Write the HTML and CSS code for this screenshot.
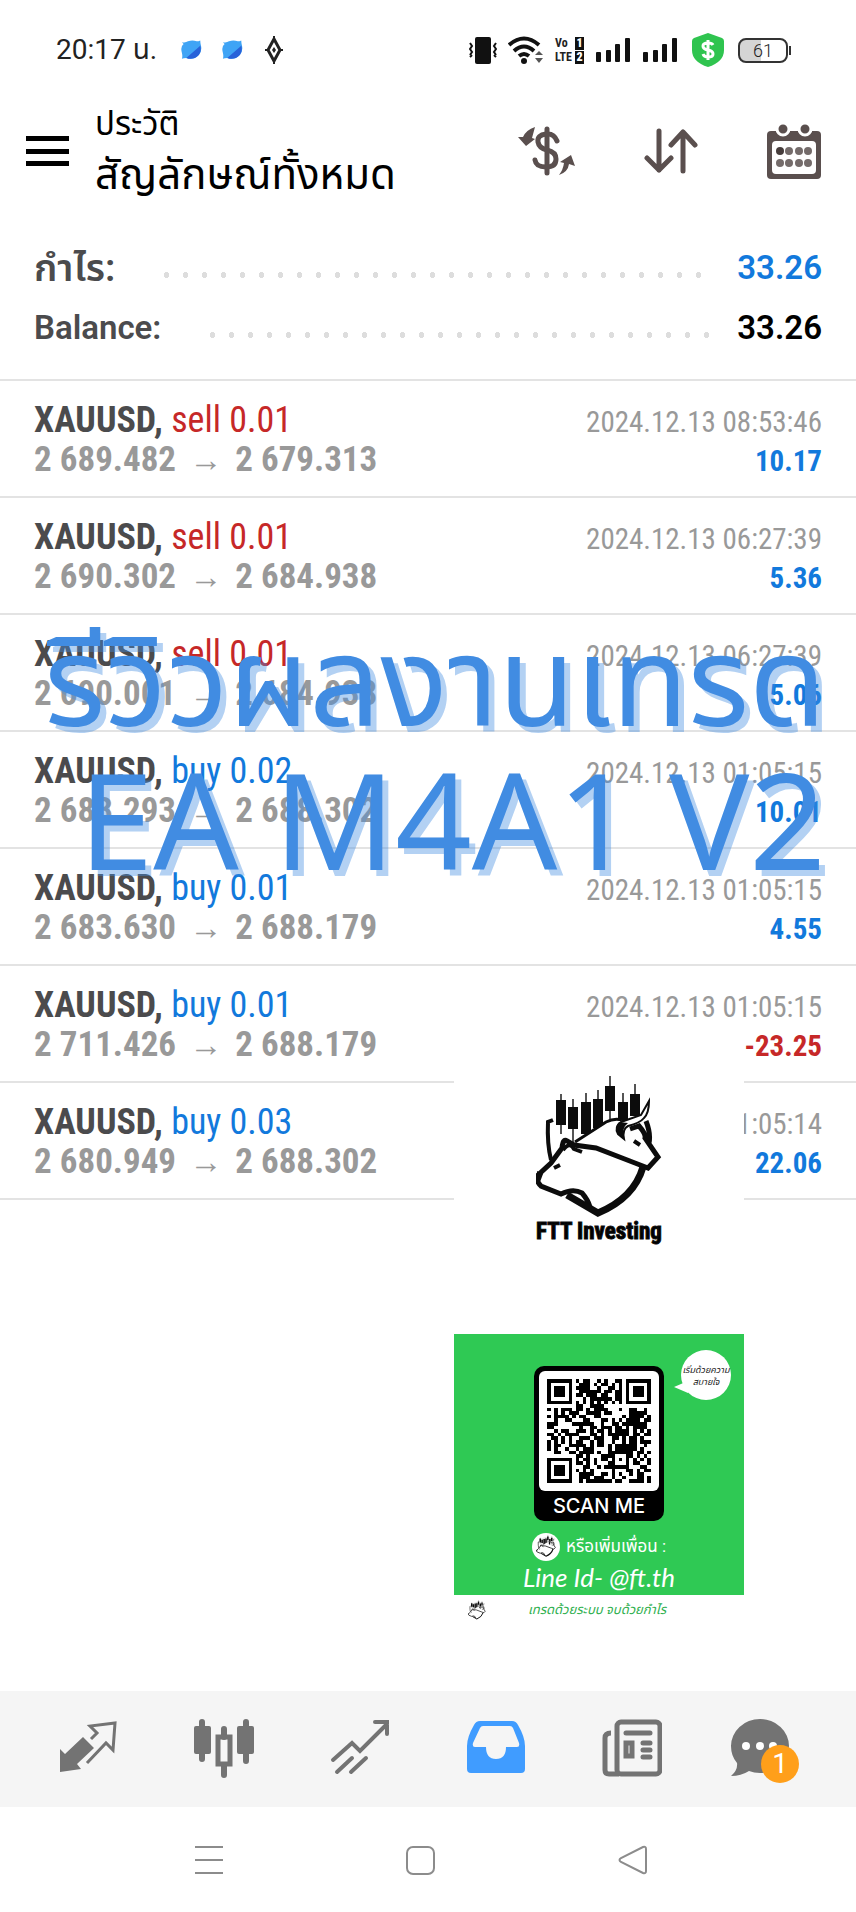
FILE: index.html
```
<!DOCTYPE html>
<html lang="th">
<head>
    <meta charset="UTF-8">
    <meta name="viewport" content="width=device-width, initial-scale=1.0">
    <title>ประวัติ</title>
    <link rel="stylesheet" href="styles.css">
</head>
<body>
    <div class="status-bar">
        <span class="clock">20:17 น.</span>
        <svg class="app-dot" width="24" height="24" viewBox="0 0 24 24"><path d="M1 3Q5 4 8 2Q13 0 18 2Q20 2 22 1Q22 4 23 8Q24 14 20 18Q14 24 6 21Q3 21 1 22Q2 19 1 15Q-1 8 3 5Z" fill="#3fa4f5"/><path d="M6 21L22 7C25 16 17 25 6 21Z" fill="#2862d9"/></svg>
        <svg class="app-dot" width="24" height="24" viewBox="0 0 24 24"><path d="M1 3Q5 4 8 2Q13 0 18 2Q20 2 22 1Q22 4 23 8Q24 14 20 18Q14 24 6 21Q3 21 1 22Q2 19 1 15Q-1 8 3 5Z" fill="#3fa4f5"/><path d="M6 21L22 7C25 16 17 25 6 21Z" fill="#2862d9"/></svg>
        <svg class="gem" width="18" height="28" viewBox="0 0 18 28"><path d="M9 3L15 14L9 25L3 14Z" fill="none" stroke="#222" stroke-width="3"/><path d="M9 0V5M9 23V28M0 14H3M15 14H18" stroke="#222" stroke-width="2"/><path d="M9 11L11 14L9 17L7 14Z" fill="#222"/></svg>

        <div class="status-right">
            <svg width="28" height="28" viewBox="0 0 28 28"><rect x="6" y="1" width="16" height="27" rx="2" fill="#111"/><path d="M1 7L3 10L1 13L3 16L1 19M3 19L1 21M27 7L25 10L27 13L25 16L27 19M25 19L27 21" fill="none" stroke="#111" stroke-width="2"/></svg>
            <svg width="36" height="28" viewBox="0 0 36 28"><g fill="none" stroke="#111" stroke-width="4"><path d="M1 9Q16 -4 31 9"/><path d="M6 15Q16 6 26 15"/><path d="M11 20Q16 16 21 20"/></g><circle cx="16" cy="25" r="3" fill="#111"/><path d="M27 19L31 15L35 19ZM27 22H35L31 27Z" fill="#555"/></svg>
            <div class="volte">
                <span>Vo</span><b>1</b>
                <span>LTE</span><b>2</b>
            </div>
            <svg width="36" height="28" viewBox="0 0 36 28" fill="#111"><rect x="1" y="16" width="5" height="10" rx="1"/><rect x="11" y="14" width="5" height="12" rx="1"/><rect x="20" y="8" width="5" height="18" rx="1"/><rect x="30" y="2" width="5" height="24" rx="1"/></svg>
            <svg width="36" height="28" viewBox="0 0 36 28" fill="#111"><rect x="1" y="16" width="5" height="10" rx="1"/><rect x="11" y="14" width="5" height="12" rx="1"/><rect x="20" y="8" width="5" height="18" rx="1"/><rect x="30" y="2" width="5" height="24" rx="1"/></svg>
            <svg class="shield" width="32" height="34" viewBox="0 0 32 34"><path d="M16 0L30 5Q32 6 32 8V17Q32 29 16 34Q0 29 0 17V8Q0 6 2 5Z" fill="#2fc44f"/><path d="M21 12Q20 10 16 10Q11 10 11 13Q11 16 16 17Q21 18 21 21Q21 24 16 24Q12 24 11 21M16 7V27" fill="none" stroke="#fff" stroke-width="3"/></svg>
            <div class="battery"><span>61</span></div>
        </div>
    </div>

    <header class="app-bar">
        <button type="button" class="menu-btn" aria-label="Menu"><i></i><i></i><i></i></button>
        <div class="titles">
            <p>ประวัติ</p>
            <h1>สัญลักษณ์ทั้งหมด</h1>
        </div>
        <div class="actions">
            <button type="button" aria-label="Symbols">
                <svg width="58" height="50" viewBox="0 0 58 50"><g fill="none" stroke="#5a4f4e" stroke-width="5" stroke-linecap="round"><path d="M29 3V47"/><path d="M39 15Q36 7 28 8Q19 9 20 16Q21 22 29 24Q38 26 38 33Q38 41 28 41Q18 41 17 34"/></g><path d="M17 1L14 12L17 13L8 20L0 11L5 11Q8 4 17 1ZM41 49Q50 46 51 38L57 40L53 29L42 36L46 37Q45 44 41 49Z" fill="#5a4f4e"/></svg>
            </button>
            <button type="button" aria-label="Sort">
                <svg width="54" height="46" viewBox="0 0 54 46"><path d="M15 3V42M3 30L15 42L27 30M39 43V4M27 17L39 4L51 17" fill="none" stroke="#5a4f4e" stroke-width="5" stroke-linecap="round" stroke-linejoin="round"/></svg>
            </button>
            <button type="button" aria-label="Calendar">
                <svg width="56" height="56" viewBox="0 0 56 56"><rect x="1" y="8" width="54" height="48" rx="4" fill="#5a4f4e"/><rect x="6" y="18" width="44" height="33" rx="4" fill="#fff"/><g fill="#5a4f4e" stroke="#fff" stroke-width="3"><circle cx="17" cy="6" r="6"/><circle cx="39" cy="6" r="6"/></g><g fill="#746b6a"><circle cx="14" cy="28" r="4" fill="#463c3b"/><circle cx="23" cy="28" r="4"/><circle cx="33" cy="28" r="4"/><circle cx="42" cy="28" r="4"/><circle cx="14" cy="40" r="4"/><circle cx="23" cy="40" r="4"/><circle cx="33" cy="40" r="4"/><circle cx="42" cy="40" r="4"/></g></svg>
            </button>
        </div>
    </header>

    <main>
        <section class="summary">
            <div class="sum-row"><span class="thai">กำไร:</span><i class="dots"></i><b class="blue">33.26</b></div>
            <div class="sum-row"><span>Balance:</span><i class="dots"></i><b>33.26</b></div>
        </section>

        <ul class="deals">
            <li>
                <div class="line"><p class="symbol"><b>XAUUSD,</b> <span class="red">sell 0.01</span></p><time>2024.12.13 08:53:46</time></div>
                <div class="line"><p class="price">2 689.482 <i>→</i> 2 679.313</p><b class="profit blue">10.17</b></div>
            </li>
            <li>
                <div class="line"><p class="symbol"><b>XAUUSD,</b> <span class="red">sell 0.01</span></p><time>2024.12.13 06:27:39</time></div>
                <div class="line"><p class="price">2 690.302 <i>→</i> 2 684.938</p><b class="profit blue">5.36</b></div>
            </li>
            <li>
                <div class="line"><p class="symbol"><b>XAUUSD,</b> <span class="red">sell 0.01</span></p><time>2024.12.13 06:27:39</time></div>
                <div class="line"><p class="price">2 690.001 <i>→</i> 2 684.938</p><b class="profit blue">5.06</b></div>
            </li>
            <li>
                <div class="line"><p class="symbol"><b>XAUUSD,</b> <span class="blue">buy 0.02</span></p><time>2024.12.13 01:05:15</time></div>
                <div class="line"><p class="price">2 683.293 <i>→</i> 2 688.302</p><b class="profit blue">10.01</b></div>
            </li>
            <li>
                <div class="line"><p class="symbol"><b>XAUUSD,</b> <span class="blue">buy 0.01</span></p><time>2024.12.13 01:05:15</time></div>
                <div class="line"><p class="price">2 683.630 <i>→</i> 2 688.179</p><b class="profit blue">4.55</b></div>
            </li>
            <li>
                <div class="line"><p class="symbol"><b>XAUUSD,</b> <span class="blue">buy 0.01</span></p><time>2024.12.13 01:05:15</time></div>
                <div class="line"><p class="price">2 711.426 <i>→</i> 2 688.179</p><b class="profit red">-23.25</b></div>
            </li>
            <li>
                <div class="line"><p class="symbol"><b>XAUUSD,</b> <span class="blue">buy 0.03</span></p><time>2024.12.13 01:05:14</time></div>
                <div class="line"><p class="price">2 680.949 <i>→</i> 2 688.302</p><b class="profit blue">22.06</b></div>
            </li>
        </ul>

        <div class="headline">
            <p class="headline-th">รีวิวผลงานเทรด</p>
            <p class="headline-en">EA M4A1 V2</p>
        </div>

        <aside class="promo">
            <div class="brand">
                <svg width="126" height="144" viewBox="0 0 126 144">
                    <g id="mark">
                        <path d="M25 18V58M37 23V66M50 17V50M62 14V46M74 0V44M87 17V45M99 8V34" stroke="#555" stroke-width="2"/>
                        <path d="M20 24H30V49H20ZM32 31H42V53H32ZM45 26H55V58H45ZM57 23H67V52H57ZM69 10H79V35H69ZM82 26H92V46H82ZM94 18H104V40H94Z" fill="#0c0c0c"/>
                        <path d="M39 66L72 44Q79 41 86 44L82 50Q84 56 88 60L92 50Q102 46 107 44L113 58Q123 75 121 86L106 90L60 72L37 69Z" fill="#fff"/>
                        <path d="M39 66L70 46Q78 42 86 44" fill="none" stroke="#0c0c0c" stroke-width="3"/>
                        <path d="M113 25L105 39L85 46Q78 51 82 58L88 63Q86 53 92 50Q104 47 108 42Q113 37 113 25Z" fill="#fff" stroke="#0c0c0c" stroke-width="2"/>
                        <path d="M83 46Q78 51 82 58L88 63Q85 52 92 47Z" fill="#0c0c0c"/>
                        <path d="M110 45Q115 58 113 67M94 53L103 50Q110 58 109 62L122 81L112 92L99 87L60 72L38 69L31 65Q27 62 26 72L15 87L1 100Q0 105 5 110L25 118Q37 112 46 117Q52 124 54 131" fill="none" stroke="#0c0c0c" stroke-width="5"/>
                        <path d="M27 74Q34 65 38 73L46 76M98 65L104 69M18 92L24 89M17 44L12 46Q11 68 15 84" fill="none" stroke="#0c0c0c" stroke-width="4"/>
                        <path d="M31 119L62 137Q98 122 107 91" fill="none" stroke="#0c0c0c" stroke-width="7"/>
                        <path d="M1 95L7 98L4 106L1 103Z" fill="#0c0c0c"/>
                    </g>
                </svg>
                <strong>FTT Investing</strong>
            </div>

            <div class="line-card">
                <div class="bubble">เริ่มด้วยความ<br>สบายใจ</div>
                <div class="scan">
                    <svg id="qr" viewBox="0 0 29 29" shape-rendering="crispEdges"></svg>
                    <b>SCAN ME</b>
                </div>
                <div class="add-friend">
                    <svg width="28" height="28" viewBox="-28 -12 180 180"><circle cx="62" cy="78" r="90" fill="#fff"/><use href="#mark"/></svg>
                    <span>หรือเพิ่มเพื่อน :</span>
                </div>
                <p class="line-id">Line Id- @ft.th</p>
            </div>
            <div class="slogan">
                <svg width="18" height="20" viewBox="0 0 126 144"><use href="#mark"/></svg>
                <em>เทรดด้วยระบบ จบด้วยกำไร</em>
            </div>
        </aside>
    </main>

    <nav class="tabs">
        <a href="#" aria-label="Quotes"><svg width="60" height="60" viewBox="0 0 60 60"><path d="M2 30L7 35L25 18L36 29L19 45L23 50L2 53Z" fill="#737373"/><path d="M33 20L39 14L32 7L57 4L55 31L48 24L29 44" fill="none" stroke="#737373" stroke-width="3"/></svg></a>
        <a href="#" aria-label="Charts"><svg width="60" height="60" viewBox="0 0 60 60"><path d="M8 3V40M52 3V42M30 10V18M30 46V56" stroke="#737373" stroke-width="6" stroke-linecap="round"/><rect x="0" y="7" width="17" height="28" rx="2" fill="#737373"/><rect x="43" y="7" width="17" height="28" rx="2" fill="#737373"/><rect x="24" y="18" width="12" height="27" fill="none" stroke="#737373" stroke-width="5"/></svg></a>
        <a href="#" aria-label="Trade"><svg width="60" height="60" viewBox="0 0 60 60"><path d="M3 41L22 24L30 32L57 5M45 3H57V15M7 53L22 39M21 53L36 39" fill="none" stroke="#737373" stroke-width="4" stroke-linecap="round"/></svg></a>
        <a href="#" aria-label="History"><svg width="60" height="60" viewBox="0 0 60 60"><path fill-rule="evenodd" d="M14 2H46Q50 2 52 6Q59 18 59 27V50Q59 54 55 54H5Q1 54 1 50V27Q1 18 8 6Q10 2 14 2ZM17 7Q15 7 14 9L7 24Q6 28 9 28H20Q20 40 30 40Q40 40 40 28H51Q54 28 53 24L47 9Q46 7 44 7Z" fill="#409cff"/></svg></a>
        <a href="#" aria-label="News"><svg width="60" height="60" viewBox="0 0 60 60"><g fill="none" stroke="#737373" stroke-width="5"><rect x="15" y="3" width="43" height="52" rx="4"/><path d="M9 14Q3 14 3 19V51Q3 55 7 55H17"/><path d="M24 14H48M41 24H48M41 31H48M41 38H48" stroke-linecap="round"/><rect x="24" y="24" width="6" height="13"/></g></svg></a>
        <a href="#" class="chat" aria-label="Messages"><svg width="60" height="60" viewBox="0 0 60 60"><path d="M30 0A29 27 0 0 1 30 54Q24 54 19 52Q11 57 1 57Q8 51 7 44Q1 37 1 27A29 27 0 0 1 30 0Z" fill="#737373"/><g fill="#fff"><circle cx="16" cy="27" r="4"/><circle cx="30" cy="27" r="4"/><circle cx="43" cy="27" r="4"/></g></svg><span class="badge">1</span></a>
    </nav>

    <div class="sys-nav">
        <button type="button" aria-label="Recent apps"><svg width="30" height="32" viewBox="0 0 30 32"><path d="M1 3H29M1 16H29M1 29H29" stroke="#8c8c8c" stroke-width="2"/></svg></button>
        <button type="button" aria-label="Home"><svg width="30" height="32" viewBox="0 0 30 32"><rect x="1" y="3" width="27" height="27" rx="6" fill="none" stroke="#8c8c8c" stroke-width="2"/></svg></button>
        <button type="button" aria-label="Back"><svg width="30" height="32" viewBox="0 0 30 32"><path d="M25 3Q28 2 28 5V27Q28 30 25 29L3 18Q0 16 3 14Z" fill="none" stroke="#8c8c8c" stroke-width="2"/></svg></button>
    </div>

    <script src="qr.js"></script>
</body>
</html>
```
FILE: styles.css
```
* {
    box-sizing: border-box;
}
body {
    margin: 0;
    min-height: 100vh;
    display: flex;
    flex-direction: column;
    background-color: #fff;
    color: #000;
    font-family: Roboto, "Noto Sans Thai", "Noto Sans", sans-serif;
}
p, h1, ul {
    margin: 0;
    padding: 0;
}
button {
    padding: 0;
    border: none;
    background: none;
    cursor: pointer;
}
svg {
    display: block;
}
i {
    font-style: normal;
}
.blue {
    color: #1279dc;
}
.red {
    color: #c62828;
}

/* status bar */
.status-bar {
    height: 100px;
    padding: 0 68px 0 56px;
    display: flex;
    align-items: center;
    color: #222;
}
.clock {
    font-size: 28px;
    margin-right: 24px;
}
.app-dot {
    width: 21px;
    margin-right: 20px;
}
.gem {
    margin-left: 2px;
}
.status-right {
    margin-left: auto;
    display: flex;
    align-items: center;
    gap: 11px;
}
.shield {
    margin: 0 3px;
}
.volte {
    display: grid;
    grid-template-columns: 19px 9px;
    gap: 1px;
    font: bold 12px/13px "Roboto Condensed", "Liberation Sans Narrow", sans-serif;
}
.volte b {
    background-color: #111;
    color: #fff;
    text-align: center;
}
.battery {
    position: relative;
    width: 50px;
    height: 25px;
    border: 2px solid #333;
    border-radius: 8px;
    background: linear-gradient(to right, #d5d5d5 45%, #fff 45%);
    text-align: center;
    font-size: 18px;
    font-weight: 300;
    line-height: 21px;
}
.battery::after {
    content: "";
    position: absolute;
    right: -5px;
    top: 6px;
    width: 2px;
    height: 9px;
    background-color: #333;
}

/* app bar */
.app-bar {
    height: 120px;
    padding: 0 34px 0 26px;
    display: flex;
}
.menu-btn {
    width: 43px;
    height: 30px;
    margin: 36px 26px 0 0;
    display: flex;
    flex-direction: column;
    justify-content: space-between;
}
.menu-btn i {
    width: 100%;
    height: 5px;
    background-color: #000;
}
.titles p {
    font-size: 33px;
    line-height: 48px;
}
.titles h1 {
    font-size: 42px;
    line-height: 54px;
    font-weight: 400;
}
.actions {
    margin-left: auto;
    height: 102px;
    display: flex;
    align-items: center;
    gap: 68px;
}

main {
    position: relative;
    flex: 1;
}
.summary {
    padding: 18px 34px 21px;
    border-bottom: 2px solid #e3e3e3;
}
.sum-row {
    display: flex;
    height: 60px;
    line-height: 60px;
    font-size: 33px;
    font-weight: 600;
    color: #4b4b4d;
}
.sum-row b {
    font-weight: 600;
}
.sum-row b:not(.blue) {
    color: #000;
}
.sum-row .thai {
    font-size: 38px;
}
.dots {
    flex: 1;
    height: 6px;
    margin: 34px 28px 0 42px;
    background: radial-gradient(circle, #ddd 3px, transparent 3px) 0 0 / 19px 6px repeat-x;
}

/* deals */
.deals {
    list-style: none;
    font-family: "Roboto Condensed", "Liberation Sans Narrow", sans-serif;
}
.deals li {
    padding: 19px 34px 16px;
    border-bottom: 2px solid #e3e3e3;
}
.line {
    display: flex;
    justify-content: space-between;
    align-items: baseline;
    height: 40px;
    line-height: 40px;
    white-space: nowrap;
}
.symbol {
    font-size: 36px;
}
.symbol b {
    color: #4b4b4d;
}
.price {
    font-size: 35px;
    font-weight: 700;
    color: #999;
}
.price i {
    margin: 0 5px;
    font-size: 33px;
    font-weight: 400;
}
time {
    font-size: 29px;
    color: #999;
}
.profit {
    font-size: 29px;
}

/* big caption over the list */
.headline {
    position: absolute;
    top: 388px;
    right: 30px;
    text-align: right;
    white-space: nowrap;
    color: #418ce2;
    text-shadow: 6px 6px 0 #418ce266;
    font-family: "Noto Sans", "Noto Sans Thai", sans-serif;
}
.headline-th {
    font-size: 125px;
    line-height: 140px;
}
.headline-en {
    font-size: 134px;
    line-height: 140px;
}

/* promo block */
.promo {
    position: absolute;
    top: 850px;
    right: 112px;
    width: 290px;
    background-color: #fff;
}
.brand {
    height: 264px;
    padding-top: 6px;
    display: flex;
    flex-direction: column;
    align-items: center;
}
.brand strong {
    font: bold 23px/24px "Roboto Condensed", "Liberation Sans Narrow", sans-serif;
    -webkit-text-stroke: 1px #0c0c0c;
}
.line-card {
    position: relative;
    height: 261px;
    padding-top: 32px;
    display: flex;
    flex-direction: column;
    align-items: center;
    background-color: #2fc954;
    color: #fff;
}
.scan {
    width: 130px;
    height: 155px;
    padding: 5px;
    background-color: #000;
    border-radius: 10px;
    text-align: center;
}
.scan svg {
    width: 120px;
    height: 120px;
    padding: 8px;
    background-color: #fff;
    border-radius: 6px;
}
.scan b {
    font: 500 20px/30px Inter, sans-serif;
}
.bubble {
    position: absolute;
    top: 16px;
    right: 13px;
    width: 50px;
    height: 50px;
    padding-top: 14px;
    border-radius: 50%;
    background-color: #fff;
    color: #222;
    font-size: 9px;
    line-height: 12px;
    font-style: italic;
    text-align: center;
    white-space: nowrap;
}
.bubble::before {
    content: "";
    position: absolute;
    left: -13px;
    top: 31px;
    border: 6px solid transparent;
    border-right: 14px solid #fff;
}
.add-friend {
    margin-top: 12px;
    display: flex;
    align-items: center;
    gap: 6px;
    height: 28px;
    font-size: 17px;
}
.line-id {
    font: italic 26px/32px Lato, sans-serif;
}
.slogan {
    height: 30px;
    padding-left: 14px;
    display: flex;
    align-items: center;
    gap: 42px;
    color: #2fb04f;
    font-size: 13px;
    white-space: nowrap;
}

/* bottom bars */
.tabs {
    height: 116px;
    padding: 0 20px;
    display: grid;
    grid-template-columns: repeat(6, 1fr);
    align-items: center;
    justify-items: center;
    background-color: #f5f5f5;
}
.chat {
    position: relative;
    margin-right: 16px;
}
.badge {
    position: absolute;
    right: -9px;
    bottom: -4px;
    width: 38px;
    height: 38px;
    border-radius: 50%;
    background-color: #ff9f1a;
    color: #fff;
    font-size: 28px;
    line-height: 38px;
    text-align: center;
}
.sys-nav {
    height: 105px;
    padding-right: 14px;
    display: flex;
    justify-content: center;
    align-items: center;
    gap: 182px;
}
```
FILE: qr.js
```
const rows = [
    "#######.#.##..#.#..##.#######",
    "#.....#..###.#.##.#.#.#.....#",
    "#.###.#.####..#..##.#.#.###.#",
    "#.###.#..######.##.##.#.###.#",
    "#.###.#.##.###.##..##.#.###.#",
    "#.....#...#.######.##.#.....#",
    "#######.#.#.#.#.#.#.#.#######",
    "........##..####.............",
    "#.#.###.##.#.####...#..##..#.",
    "..#.#.###..####.##.....#####.",
    "#.####.#.##..##......#.####.#",
    "..#..##...##...##.#.#.####.##",
    "###....######..#..##.#######.",
    "##.......#..##.###.##.#.####.",
    "..#.##..###.#.##.#.####.#.#.#",
    "##.#.####...##.#.######.##.##",
    ".##.#.#..###.###..##.#.##.#..",
    "#.#.#.#.##..#.##..#..#.##.###",
    "#.##..#####.#.##.#.######..#.",
    "#.#..#..#.###....#.######.#..",
    "..##..##.####.#..#######.##.#",
    "........##.#...####...##.#.#.",
    "#######.#.##.#.##.#.#.#.#.#.#",
    "#.....#.##.#.#...##...#.##..#",
    "#.###.#...##..#.#######...##.",
    "#.###.#.#.#.#.....#...##.#.##",
    "#.###.#..####..##.#.#..#.##..",
    "#.....#..###.###..#..#...##.#",
    "#######..#.#######.##..####.#"
];
let d = "";
rows.forEach((row, y) => {
    [...row].forEach((cell, x) => {
        if (cell === "#") d += `M${x} ${y}h1v1h-1z`;
    });
});
document.getElementById("qr").innerHTML = `<path d="${d}"/>`;
```
